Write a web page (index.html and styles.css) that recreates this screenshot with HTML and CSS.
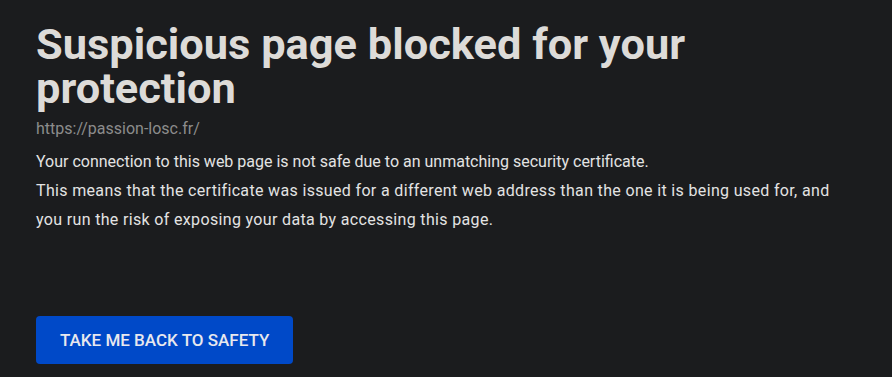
FILE: index.html
```html
<!DOCTYPE html>
<html lang="en">
<head>
    <meta charset="UTF-8">
    <meta name="viewport" content="width=device-width, initial-scale=1.0">
    <title>Suspicious page blocked</title>
    <link rel="stylesheet" href="styles.css">
</head>
<body>
    <div class="container">
        <h1>Suspicious page blocked for your protection</h1>
        <p class="url">https://passion-losc.fr/</p>
        <div class="message">
            <p>Your connection to this web page is not safe due to an unmatching security certificate.</p>
            <p class="details">This means that the certificate was issued for a different web address than the one it is being used for, and you run the risk of exposing your data by accessing this page.</p>
        </div>
        <div class="actions">
            <button class="back-button">Take me back to safety</button>
        </div>
    </div>
</body>
</html>
```

FILE: styles.css
```css
html, body {
    height: 100%;
}
body {
    margin: 0;
    background-color: #1b1c1e;
    color: #e3e3e3;
    font-family: Roboto, 'Noto Sans', sans-serif;
}
.container {
    padding: 23px 36px 0 36px;
    max-width: 810px;
}
h1 {
    margin: 0;
    font-size: 43.4px;
    font-weight: 700;
    line-height: 44px;
    color: #dddbd8;
}
.url {
    margin: 6px 0 0 0;
    font-size: 16px;
    line-height: 24px;
    color: #8c8c8c;
}
.message {
    margin-top: 6px;
    font-size: 16px;
    line-height: 29px;
    color: #e3e3e3;
}
.message p {
    margin: 0;
}
.message .details {
    letter-spacing: 0.34px;
}
.actions {
    margin-top: 82px;
}
.back-button {
    background-color: #0049c8;
    color: #e8e8ee;
    border: none;
    border-radius: 4px;
    height: 48px;
    padding: 0 24px;
    font-family: Roboto, 'Noto Sans', sans-serif;
    font-size: 17px;
    font-weight: 500;
    text-transform: uppercase;
    cursor: pointer;
}
.back-button:hover {
    background-color: #003da8;
}
```
